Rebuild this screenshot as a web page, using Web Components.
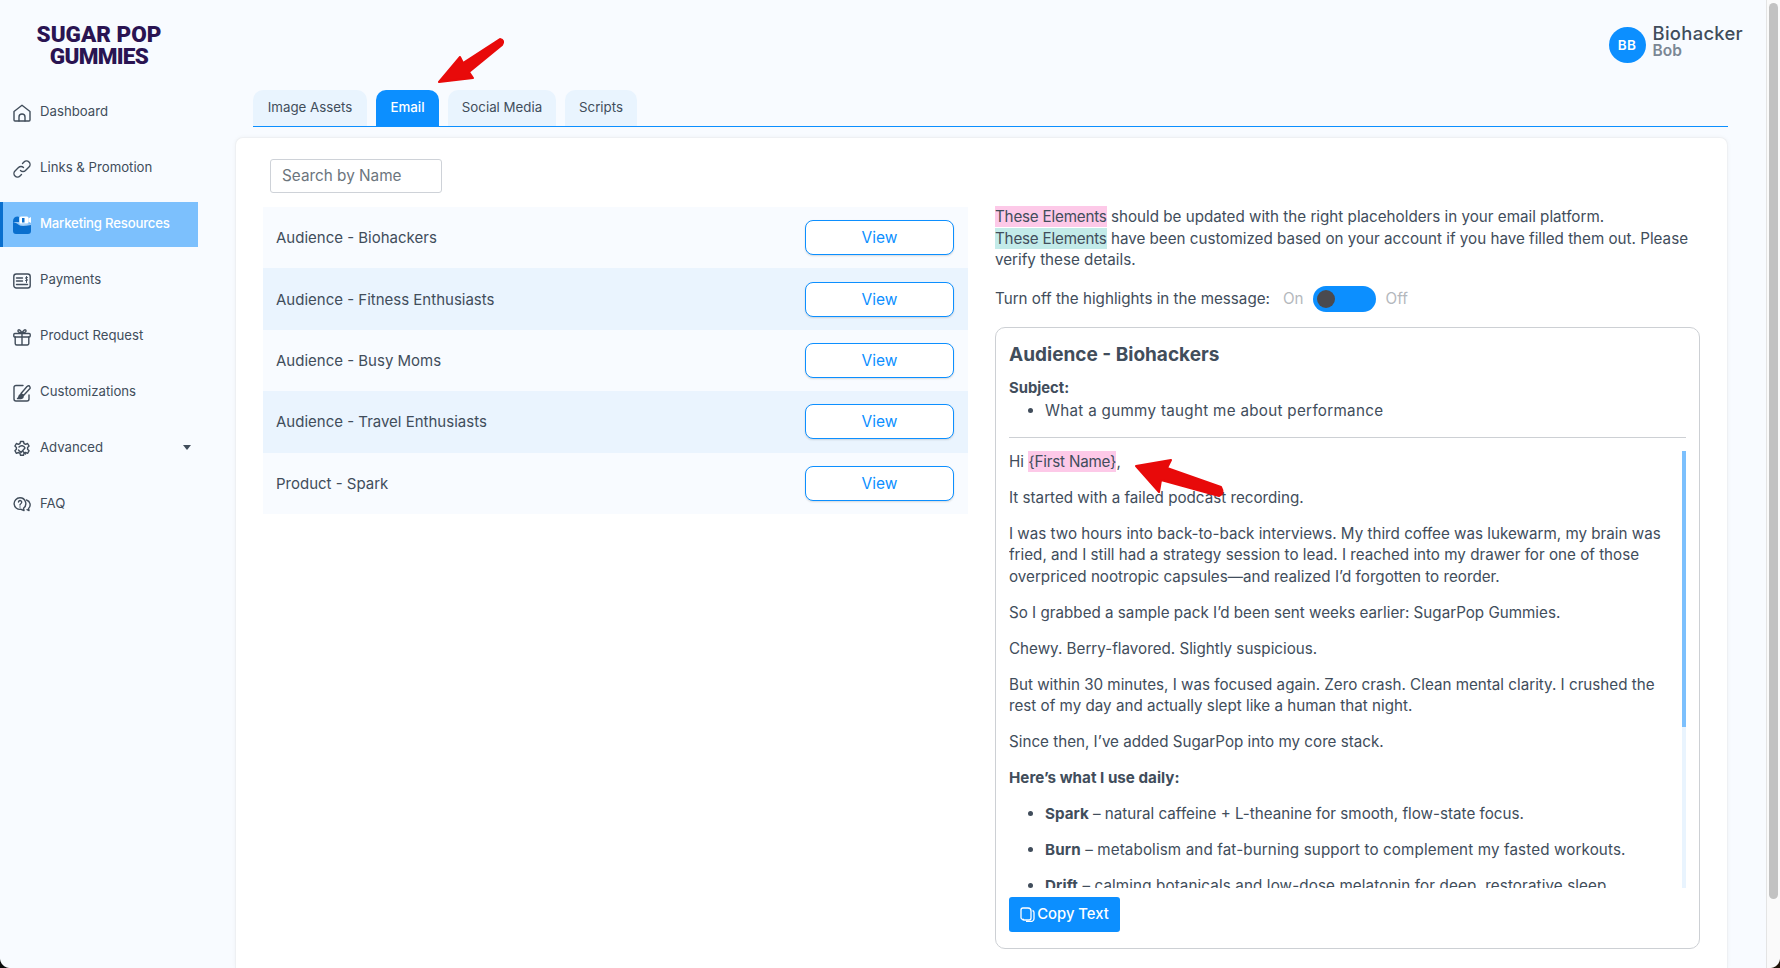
<!DOCTYPE html>
<html><head><meta charset="utf-8">
<style>
html,body{margin:0;height:100%;overflow:hidden;background:#f8fbff}
body{font-family:"Inter","Liberation Sans",sans-serif;color:#414d5b}
</style></head><body>
<app-shell></app-shell>
<template id="shell-t"><style>
:host{display:grid;grid-template-columns:235px 1fr 14px;height:968px;position:relative;overflow:hidden;background:#f8fbff}
.main{min-width:0;display:flex;flex-direction:column;height:968px}
.top{height:90px;flex:none;display:flex;justify-content:flex-end;padding:27px 23px 0 0;box-sizing:border-box}
.tabs{margin:0 38px 0 18px}
.body{flex:1;margin:10px 38px 0 0;background:#fff;border:1px solid #eef0f3;border-bottom:0;border-radius:8px 8px 0 0;box-shadow:0 0 4px rgba(0,0,0,.04);display:grid;grid-template-columns:705px 705px;column-gap:27px;padding:21px 0 0 27px;box-sizing:border-box}
.left{min-width:0}
.right{min-width:0;padding-top:47px}
.sb{background:#fafafa;border-left:1px solid #e4e4e4;padding:3px 2px 0 2px;box-sizing:border-box}
.sb i{display:block;height:896px;background:#c2c2c2;border-radius:5px}
.arrow{position:absolute;pointer-events:none}
.corner{position:absolute;bottom:0;width:10px;height:10px}
.cl{left:0;background:radial-gradient(circle at 100% 0,transparent 9.5px,#0c0c0c 10.5px)}
.cr{right:0;background:radial-gradient(circle at 0 0,transparent 9.5px,#21150a 10.5px)}
</style>
<side-nav></side-nav>
<div class="main">
<div class="top"><user-chip></user-chip></div>
<tab-bar class="tabs"></tab-bar>
<div class="body">
<div class="left"><search-box></search-box><res-list></res-list></div>
<div class="right"><info-panel></info-panel></div>
</div>
</div>
<div class="sb"><i></i></div>
<svg class="arrow" style="left:436px;top:36px" width="68" height="50" viewBox="0 0 68 50"><path d="M64 3 L27 27 L24 21 L3 46 L37 42 L33 36 L66 9 Q69 4 64 3Z" fill="#e80a0a" stroke="#e80a0a" stroke-width="2" stroke-linejoin="round"/></svg>
<svg class="arrow" style="left:1133px;top:458px" width="92" height="46" viewBox="0 0 92 46"><path d="M3 8 L38 2 L34 10 L88 29 Q92 36 86 38 L28 22 L26 34 Z" fill="#e80a0a" stroke="#e80a0a" stroke-width="2" stroke-linejoin="round"/></svg>
<span class="corner cl"></span><span class="corner cr"></span>
</template>

<template id="nav-t"><style>
:host{display:block;box-sizing:border-box;height:968px}
.logo{height:85px;display:flex;flex-direction:column;align-items:center;padding:23px 37px 0 0;box-sizing:border-box;font:900 22.5px/22px "Roboto","Liberation Sans",sans-serif;color:#2a1452}
.logo span{display:block}
.logo span+span{letter-spacing:-.7px}
nav{display:flex;flex-direction:column;gap:11px;padding-top:5px;width:198px}
a{display:flex;align-items:center;height:45px;padding:0 0 4px 13px;gap:9px;font-size:13.2px;color:#414d5b;box-sizing:border-box;white-space:nowrap;position:relative}
a svg{position:relative;top:2px}
a.on{background:#7cc0fd;color:#fff;border-left:3px solid #0a6fce;padding-left:10px;font-weight:500;letter-spacing:-.2px}
svg{width:18px;height:18px;flex:none;fill:none;stroke:#414d5b;stroke-width:1.4;stroke-linecap:round;stroke-linejoin:round}
.caret{position:absolute;right:7px;top:19px;border:4.5px solid transparent;border-top:5px solid #414d5b;border-bottom:0}
</style>
<div class="logo"><span>SUGAR POP</span><span>GUMMIES</span></div>
<nav>
<a><svg viewBox="0 0 18 18"><path d="M1 16V7.5L9 1.3l8 6.2V16a1 1 0 0 1-1 1H2a1 1 0 0 1-1-1Z"/><path d="M6 17v-4a3 3 0 0 1 6 0v4"/></svg>Dashboard</a>
<a><svg viewBox="0 0 18 18"><path d="M7.500 10.500a3.500 3.500 0 0 0 5 0l3.500-3.500a3.500 3.500 0 0 0-5-5L9.500 3.500"/><path d="M10.500 7.500a3.500 3.500 0 0 0-5 0L2 11a3.500 3.500 0 0 0 5 5l1.500-1.500"/></svg>Links &amp; Promotion</a>
<a class="on"><svg viewBox="0 0 18 18" style="stroke:none"><path d="M0 5.500Q0 .5 5 .5L6 1v7q5 3 12-1v8a3 3 0 0 1-3 3H3a3 3 0 0 1-3-3Z" fill="#0a6fce"/><path d="M0 6q4 1 6 3t12 0v-2q-6 3-12-1Z" fill="#bcdcfb" opacity=".8"/><rect x="6.500" y=".5" width="9" height="7" rx="1.500" fill="#fff"/><rect x="9" y="2" width="2.500" height="4.500" fill="#0a6fce"/><path d="M15.500 2.500 18 1v6l-2.500-1.500Z" fill="#fff"/></svg>Marketing Resources</a>
<a><svg viewBox="0 0 18 18"><rect x=".8" y="2" width="16.400" height="14" rx="2.500"/><path d="M3.500 6h6M3.500 9h6M3.500 12.500h11"/><path d="M14.500 5.500c-1-.6-2-.3-2 .6s2 .8 2 1.800-1 1.200-2 .6M13.500 4.500v6" stroke-width="1"/></svg>Payments</a>
<a><svg viewBox="0 0 18 18"><rect x=".8" y="5.500" width="16.400" height="3.500" rx="1"/><path d="M2.200 9v6.500a1.500 1.500 0 0 0 1.500 1.500h10.600a1.500 1.500 0 0 0 1.500-1.500V9M9 5.500V17M9 5.500C7 5 4.500 4 5 2.500S8 2 9 5.500ZM9 5.500c2-.5 4.500-1.500 4-3S10 2 9 5.500Z"/></svg>Product Request</a>
<a><svg viewBox="0 0 18 18"><path d="M10 1.500H3a2 2 0 0 0-2 2V15a2 2 0 0 0 2 2h11a2 2 0 0 0 2-2v-4"/><path d="M8 9.500 14 2.500q2-1.500 2.800.2t-.3 2.300L10.500 11.500Z"/><path d="M8 10.500q2.500.5 2 2.500t-5.500 1.500q1.500-.8 1.500-2.200t2-1.800Z" fill="#414d5b"/></svg>Customizations</a>
<a><svg viewBox="0 0 18 18" stroke-width="1.200"><path d="M7.500 1.500h3l.5 2 1.600.8 2-.8 1.500 2.600-1.500 1.400v1.800l1.500 1.400-1.500 2.600-2-.8-1.600.8-.5 2h-3l-.5-2-1.600-.8-2 .8-1.500-2.600 1.500-1.400V7.500L1.900 6.100l1.500-2.600 2 .8L7 3.500Z"/><path d="M6 7a3.500 3.500 0 0 1 6 1L8 12.500 5.500 10"/><path d="M10 11.500l2.500 2.500"/></svg>Advanced<span class="caret"></span></a>
<a><svg viewBox="0 0 18 18" stroke-width="1.200"><path d="M7 1.800a5.800 5.800 0 0 1 3.500 10.400L11 14.500l-3-1.200A5.800 5.800 0 1 1 7 1.800Z"/><path d="M5.500 6a1.600 1.600 0 1 1 2.500 1.500c-.7.400-1 .8-1 1.500M7 11v.1"/><path d="M13.500 4a5 5 0 0 1 2 8.500l.5 2-2-.8"/></svg>FAQ</a>
</nav></template>

<template id="user-t"><style>
:host{display:flex;gap:7px;align-items:flex-start;height:36px}
.a{width:37px;height:36px;border-radius:50%;background:#0c8fff;color:#fff;font-weight:600;font-size:13.500px;display:flex;align-items:center;justify-content:center;letter-spacing:.3px}
.t{margin-top:-3px}
.n{font-size:18.400px;line-height:19px;color:#414d5b;font-weight:500;letter-spacing:.3px}
.s{font-size:15.500px;line-height:15px;color:#7b8794;font-weight:600}
</style><div class="a">BB</div><div class="t"><div class="n">Biohacker</div><div class="s">Bob</div></div></template>

<template id="tabs-t"><style>
:host{display:flex;gap:9px;height:37px;border-bottom:1.500px solid #0c8fff;box-sizing:border-box;flex:none}
a{height:36px;display:flex;align-items:center;justify-content:center;background:#e9f4fe;border-radius:10px 10px 0 0;font-size:13.300px;color:#414d5b;box-sizing:border-box;padding-bottom:2px}
a.on{background:#0c8fff;color:#fff;font-weight:500}
</style><a style="width:114px">Image Assets</a><a class="on" style="width:63px">Email</a><a style="width:108px">Social Media</a><a style="width:72px">Scripts</a></template>

<template id="search-t"><style>
:host{display:block;margin:0 0 14px 7px}
div{width:172px;height:34px;border:1px solid #ced2d8;border-radius:3px;box-sizing:border-box;display:flex;align-items:center;padding:0 0 2px 11px;font-size:15.300px;color:#6c757d;background:#fff}
</style><div>Search by Name</div></template>

<template id="list-t"><style>
:host{display:block}
.r{display:flex;align-items:center;justify-content:space-between;height:61.400px;padding:0 14px 0 13px;background:#f8fbff;font-size:15px;color:#414d5b}
.r:nth-of-type(even){background:#eaf4fe}
b{width:149px;height:35px;border:1px solid #0c8fff;border-radius:8px;color:#0c8fff;font-weight:400;font-size:15.500px;display:flex;align-items:center;justify-content:center;background:#fff;box-sizing:border-box;box-shadow:0 1px 2px rgba(0,0,0,.14)}
</style>
<div class="r"><span>Audience - Biohackers</span><b>View</b></div>
<div class="r"><span>Audience - Fitness Enthusiasts</span><b>View</b></div>
<div class="r"><span>Audience - Busy Moms</span><b>View</b></div>
<div class="r"><span>Audience - Travel Enthusiasts</span><b>View</b></div>
<div class="r"><span>Product - Spark</span><b>View</b></div></template>

<template id="info-t"><style>
:host{display:block;font-size:15.200px;color:#414d5b;line-height:21.500px}
mark{background:#fdc9e8;color:inherit;padding:1px 0;letter-spacing:-.2px}
mark.t{background:#c3ebe9}
.tg{display:flex;align-items:center;height:26px;margin-top:15px;margin-bottom:15px}
.tg .o{color:#b4b8bd;margin-left:13px}
.sw{width:63px;height:26px;border-radius:13px;background:#0c8fff;margin:0 10px 0 9px;position:relative}
.sw i{position:absolute;left:4px;top:4px;width:18px;height:18px;border-radius:50%;background:#4a4a4f}
.tg .o2{color:#b4b8bd}
.box{border:1px solid #cdd0d4;border-radius:10px;height:622px;box-sizing:border-box;padding:14.500px 13px 0;display:flex;flex-direction:column}
h2{margin:0;font-size:19px;line-height:26px;font-weight:700;color:#414d5b}
.sub{margin-top:10px;font-weight:700;font-size:14.800px}
ul{margin:0;padding-left:36px}
.s2{letter-spacing:.3px}
hr{border:0;border-top:1px solid #cdd0d4;margin:15.500px 0 0;flex:none}
.scroll{height:439px;flex:none;margin-top:11px;padding:2px 22px 0 0;box-sizing:border-box;overflow:hidden;position:relative}
.scroll p{margin:0 0 14.500px}
.scroll li{margin-bottom:14.500px}
.wide{letter-spacing:.12px}
.bar{position:absolute;right:0;top:2px;width:4px;height:437px;background:#e9f4fe}
.bar i{display:block;height:276px;background:#7cc0fd}
.copy{margin-top:9px;width:111px;height:35px;background:#0c8fff;color:#fff;border-radius:3px;display:flex;align-items:center;justify-content:center;gap:2px;font-weight:500;font-size:14.800px;flex:none;padding-top:1px;box-sizing:border-box}
.copy svg{width:15px;height:15px;fill:none;stroke:#fff;stroke-width:1.300}
</style>
<div><mark>These Elements</mark> should be updated with the right placeholders in your email platform.<br><mark class="t">These Elements</mark> have been customized based on your account if you have filled them out. Please<br>verify these details.</div>
<div class="tg">Turn off the highlights in the message:<span class="o">On</span><span class="sw"><i></i></span><span class="o2">Off</span></div>
<div class="box">
<h2>Audience - Biohackers</h2>
<div class="sub">Subject:</div>
<ul class="s2"><li>What a gummy taught me about performance</li></ul>
<hr>
<div class="scroll">
<p>Hi <mark>{First Name}</mark>,</p>
<p>It started with a failed podcast recording.</p>
<p>I was two hours into back-to-back interviews. My third coffee was lukewarm, my brain was<br>fried, and I still had a strategy session to lead. I reached into my drawer for one of those<br>overpriced nootropic capsules—and realized I’d forgotten to reorder.</p>
<p>So I grabbed a sample pack I’d been sent weeks earlier: SugarPop Gummies.</p>
<p>Chewy. Berry-flavored. Slightly suspicious.</p>
<p>But within 30 minutes, I was focused again. Zero crash. Clean mental clarity. I crushed the<br>rest of my day and actually slept like a human that night.</p>
<p>Since then, I’ve added SugarPop into my core stack.</p>
<p><b>Here’s what I use daily:</b></p>
<ul>
<li><b>Spark</b> – natural caffeine + L-theanine for smooth, flow-state focus.</li>
<li class="wide"><b>Burn</b> – metabolism and fat-burning support to complement my fasted workouts.</li>
<li class="wide"><b>Drift</b> – calming botanicals and low-dose melatonin for deep, restorative sleep.</li>
</ul>
<div class="bar"><i></i></div>
</div>
<div class="copy"><svg viewBox="0 0 15 15"><path d="M4 12.500H3a2 2 0 0 1-2-2V3a2 2 0 0 1 2-2h5a3 3 0 0 1 3 3v7a2 2 0 0 1-2 2H4a2 2 0 0 1-2-1"/><path d="M12.500 3.500a2 2 0 0 1 1.500 2v6a3 3 0 0 1-3 3H6"/></svg>Copy Text</div>
</div></template>

<script>
const def=(n,t)=>customElements.define(n,class extends HTMLElement{constructor(){super();this.attachShadow({mode:'open'}).appendChild(document.getElementById(t).content.cloneNode(true))}});
def('side-nav','nav-t');def('user-chip','user-t');def('tab-bar','tabs-t');def('search-box','search-t');def('res-list','list-t');def('info-panel','info-t');def('app-shell','shell-t');
</script>
</body></html>
